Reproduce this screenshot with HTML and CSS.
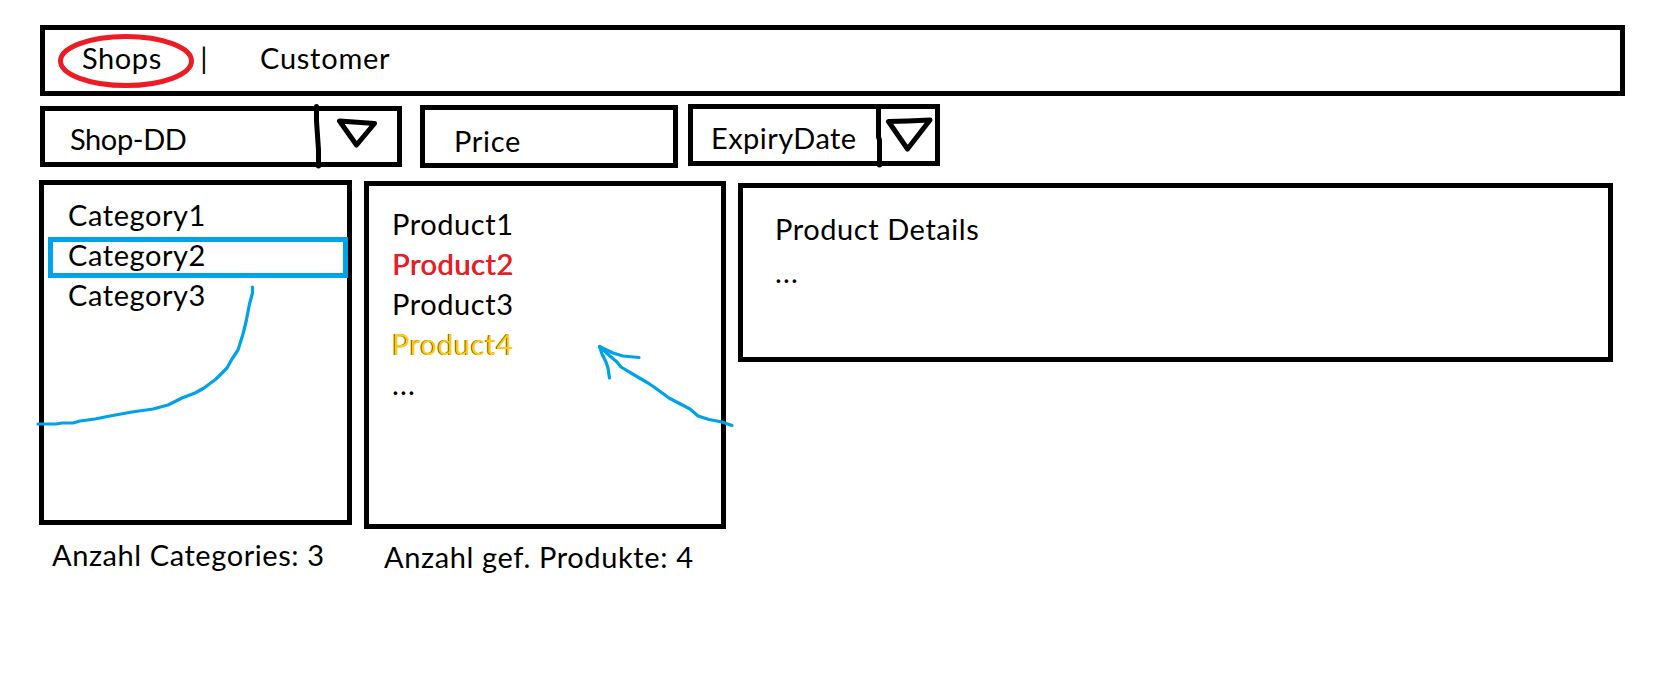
FILE: index.html
```html
<!DOCTYPE html>
<html lang="de">
<head>
<meta charset="utf-8">
<title>Shops</title>
<link rel="stylesheet" href="styles.css">
</head>
<body>
<main class="page">
  <nav class="box nav">
    <span class="nav-shops">Shops</span>
    <span class="nav-sep">|</span>
    <span class="nav-customer">Customer</span>
  </nav>
  <section class="filters">
    <div class="box shop"><span>Shop-DD</span></div>
    <div class="box price"><span>Price</span></div>
    <div class="box expiry"><span>ExpiryDate</span></div>
  </section>
  <section class="columns">
    <div class="col-cat">
      <ul class="box categories">
        <li>Category1</li>
        <li class="selected">Category2</li>
        <li>Category3</li>
      </ul>
      <p class="count count-cat">Anzahl Categories: 3</p>
    </div>
    <div class="col-prod">
      <ul class="box products">
        <li>Product1</li>
        <li class="red">Product2</li>
        <li>Product3</li>
        <li class="yellow">Product4</li>
        <li class="dots">...</li>
      </ul>
      <p class="count count-prod">Anzahl gef. Produkte: 4</p>
    </div>
    <article class="box details">
      <p class="details-title">Product Details</p>
      <p class="dots">...</p>
    </article>
  </section>
  <svg class="ink" width="1663" height="678" viewBox="0 0 1663 678">
    <ellipse class="ring" cx="126" cy="61" rx="65.5" ry="24.5"/>
    <g class="pen">
      <path d="M316.500 106.500V121L318.500 150V166"/>
      <path d="M339.500 121L374.500 123.500L356.500 145Z"/>
      <path d="M878.500 108V137L879.500 140V165"/>
      <path d="M888.500 121.500L908 121L930 120L907.500 149Z"/>
    </g>
    <g class="blue">
      <path d="M252.500 287V293L249.500 304L246 322L243 334L238 350L232 359L227 368L216 379L204 388L195 393L182 398L168 405L153 409L132 412L110 416L95 419L80 421L73 423H62L56 424H38"/>
      <path d="M732 425.500L722 422L709 419.500L698 416L690 409L669 398L654 387L648 383L636 376L621 367L617 362L610 356L600 347"/>
      <path d="M639 357.500L623 356L613 353L599.500 346.500L602 354L606 362L608 368L609.500 378"/>
    </g>
  </svg>
</main>
</body>
</html>
```
FILE: styles.css
```css
* { box-sizing: border-box; }
body { margin: 0; background: #fff; color: #000; font: 29px/40px Lato, sans-serif; letter-spacing: .57px; }
p, ul { margin: 0; padding: 0; list-style: none; }
.page { position: relative; height: 678px; padding: 25px 38px 0 39px; overflow: hidden; }
.box { border: 5px solid #000; }
.nav { display: flex; height: 71px; margin-left: 1px; padding: 8px 0 0 37px; }
.nav-shops { width: 116px; }
.nav-sep { width: 12px; text-align: center; letter-spacing: 0; }
.nav-customer { margin-left: 50px; letter-spacing: .75px; }
.filters { display: flex; align-items: flex-start; height: 84px; padding: 8px 0 0 1px; }
.shop { width: 362px; height: 61px; margin: 2px 18px 0 0; padding: 8px 0 0 25px; letter-spacing: -.4px; }
.price { width: 258px; height: 63px; margin: 1px 10px 0 0; padding: 11px 0 0 29px; letter-spacing: .7px; }
.price { height: 63px; }
.expiry { width: 252px; height: 62px; padding: 9px 0 0 18px; letter-spacing: .45px; }
.columns { display: flex; align-items: flex-start; }
.col-cat { width: 313px; margin-right: 12px; }
.categories { height: 345px; padding: 10px 0 0 4px; }
.categories li { height: 40px; padding-left: 20px; }
.categories .selected { width: 300px; height: 41px; margin: 2px 0 -3px; padding-left: 15px; border: 5px solid #00a2e8; line-height: 26px; }
.col-prod { width: 362px; margin: 1px 12px 0 0; }
.products { height: 348px; padding: 18px 0 0 23px; }
.red { color: #ed1c24; text-shadow: .6px 0 #b0101a; }
.yellow { color: #ffc90e; text-shadow: -1px 0 #806000; }
.count { white-space: nowrap; }
.count-cat { padding: 10px 0 0 13px; }
.count-prod { padding: 8px 0 0 20px; letter-spacing: .62px; }
.details { width: 875px; height: 179px; margin-top: 3px; padding: 21px 0 0 32px; }
.details .dots { margin-top: 3px; }
.dots { letter-spacing: 1.2px; }
.ink { position: absolute; left: 0; top: 0; fill: none; stroke-linecap: round; stroke-linejoin: round; pointer-events: none; }
.ring { stroke: #ed1c24; stroke-width: 5; }
.pen { stroke: #000; stroke-width: 5; }
.blue { stroke: #00a2e8; stroke-width: 3.2; }
```
